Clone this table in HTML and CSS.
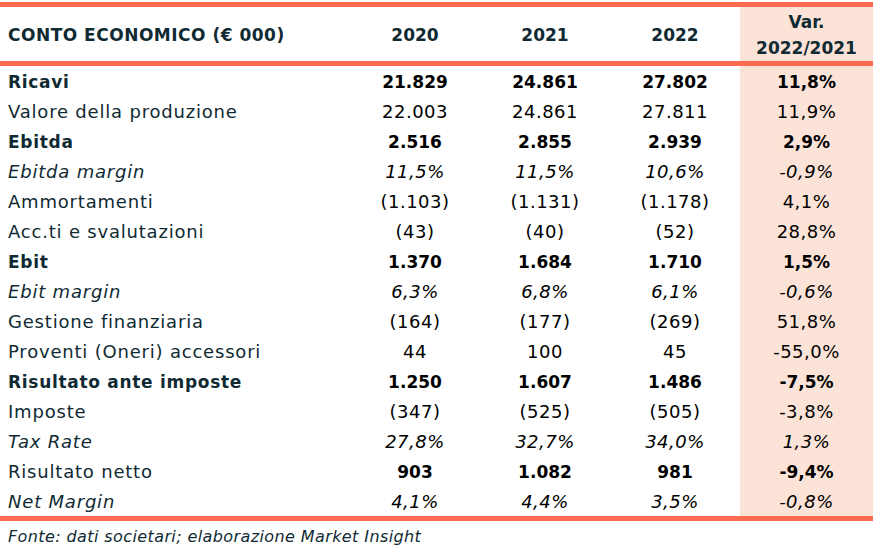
FILE: index.html
```html
<!DOCTYPE html>
<html lang="it">
<head>
<meta charset="utf-8">
<title>Conto economico</title>
<link rel="stylesheet" href="styles.css">
</head>
<body>
<div class="wrap">
<table class="ce">
  <thead>
    <tr>
      <th class="lbl">CONTO ECONOMICO (€ 000)</th>
      <th>2020</th>
      <th>2021</th>
      <th>2022</th>
      <th class="var">Var.<br>2022/2021</th>
    </tr>
  </thead>
  <tbody>
    <tr class="b"><td class="lbl">Ricavi</td><td>21.829</td><td>24.861</td><td>27.802</td><td class="var">11,8%</td></tr>
    <tr><td class="lbl">Valore della produzione</td><td>22.003</td><td>24.861</td><td>27.811</td><td class="var">11,9%</td></tr>
    <tr class="b"><td class="lbl">Ebitda</td><td>2.516</td><td>2.855</td><td>2.939</td><td class="var">2,9%</td></tr>
    <tr class="i"><td class="lbl">Ebitda margin</td><td>11,5%</td><td>11,5%</td><td>10,6%</td><td class="var">-0,9%</td></tr>
    <tr><td class="lbl">Ammortamenti</td><td>(1.103)</td><td>(1.131)</td><td>(1.178)</td><td class="var">4,1%</td></tr>
    <tr><td class="lbl">Acc.ti e svalutazioni</td><td>(43)</td><td>(40)</td><td>(52)</td><td class="var">28,8%</td></tr>
    <tr class="b"><td class="lbl">Ebit</td><td>1.370</td><td>1.684</td><td>1.710</td><td class="var">1,5%</td></tr>
    <tr class="i"><td class="lbl">Ebit margin</td><td>6,3%</td><td>6,8%</td><td>6,1%</td><td class="var">-0,6%</td></tr>
    <tr><td class="lbl">Gestione finanziaria</td><td>(164)</td><td>(177)</td><td>(269)</td><td class="var">51,8%</td></tr>
    <tr><td class="lbl">Proventi (Oneri) accessori</td><td>44</td><td>100</td><td>45</td><td class="var">-55,0%</td></tr>
    <tr class="b"><td class="lbl">Risultato ante imposte</td><td>1.250</td><td>1.607</td><td>1.486</td><td class="var">-7,5%</td></tr>
    <tr><td class="lbl">Imposte</td><td>(347)</td><td>(525)</td><td>(505)</td><td class="var">-3,8%</td></tr>
    <tr class="i"><td class="lbl">Tax Rate</td><td>27,8%</td><td>32,7%</td><td>34,0%</td><td class="var">1,3%</td></tr>
    <tr class="bv"><td class="lbl">Risultato netto</td><td>903</td><td>1.082</td><td>981</td><td class="var">-9,4%</td></tr>
    <tr class="i"><td class="lbl">Net Margin</td><td>4,1%</td><td>4,4%</td><td>3,5%</td><td class="var">-0,8%</td></tr>
  </tbody>
</table>
<p class="src">Fonte: dati societari; elaborazione Market Insight</p>
</div>
</body>
</html>
```
FILE: styles.css
```css
html, body {
  margin: 0;
  padding: 0;
  background: #ffffff;
}
body {
  font-family: "DejaVu Sans", "Liberation Sans", sans-serif;
  color: #000;
}
.wrap {
  padding-top: 2px;
  width: 873px;
}
.ce {
  width: 873px;
  border-collapse: collapse;
  table-layout: fixed;
  border-top: 5px solid #ff6b50;
  border-bottom: 5px solid #ff6b50;
}
.ce th, .ce td {
  padding: 0;
  text-align: center;
  white-space: nowrap;
  box-sizing: border-box;
}
.ce th {
  height: 54px;
  font-size: 17px;
  font-weight: bold;
  color: #0f2a33;
  border-bottom: 5px solid #ff6b50;
  line-height: 26px;
  padding-top: 2px;
}
.ce th.lbl {
  width: 350px;
  letter-spacing: 0.5px;
}
.ce th:nth-child(2), .ce th:nth-child(3), .ce th:nth-child(4) {
  width: 130px;
}
.ce td {
  height: 30px;
  line-height: 28px;
  padding-top: 2px;
  font-size: 18px;
  letter-spacing: 0.5px;
}
.ce .lbl {
  text-align: left;
  padding-left: 8px;
  color: #0f2a33;
}
.ce td.lbl {
  letter-spacing: 0.8px;
}
.ce .var {
  background: #fce3d7;
}
.ce tr.b td,
.ce tr.bv td:not(.lbl) {
  font-weight: bold;
  font-size: 17px;
  letter-spacing: 0;
}
.ce tr.b td.lbl {
  letter-spacing: 0.7px;
}
.ce tr.i td {
  font-style: italic;
}
.src {
  margin: 6px 0 0 8px;
  font-size: 16px;
  letter-spacing: 0.4px;
  font-style: italic;
  color: #0f2a33;
}
```
